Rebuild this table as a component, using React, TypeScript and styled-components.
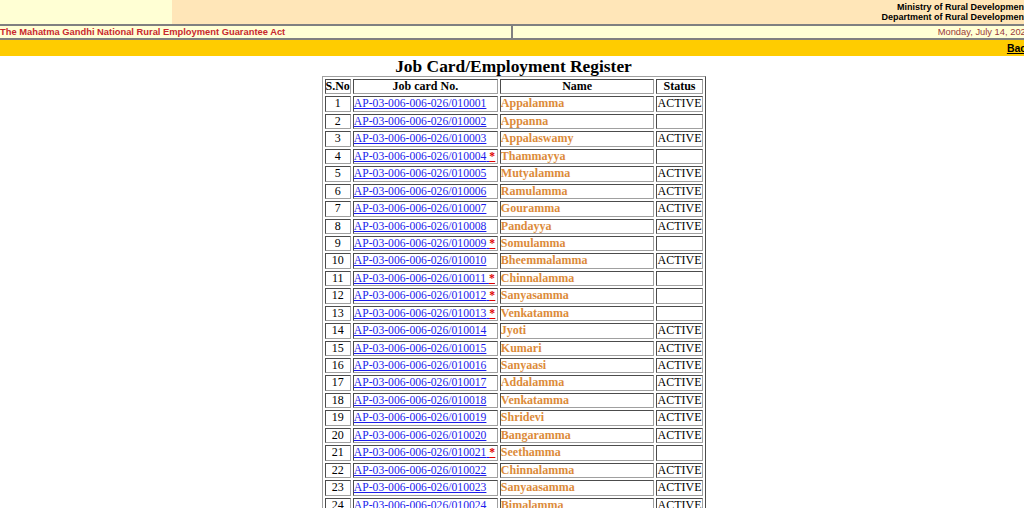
import React from "react";
import styled, { createGlobalStyle } from "styled-components";

const Global = createGlobalStyle`
  html, body { margin: 0; padding: 0; overflow: hidden; background: #ffffff; }
  * { box-sizing: border-box; }
`;

const Page = styled.div`
  width: 1027px;
  font-family: "Liberation Serif", "Times New Roman", serif;
`;

const TopBand = styled.div`
  display: flex;
  height: 24px;
`;

const LogoCell = styled.div`
  width: 172px;
  background: #ffffd4;
`;

const MinistryCell = styled.div`
  flex: 1;
  background: #ffe6b8;
  text-align: right;
  font-family: "Liberation Sans", Arial, sans-serif;
  font-weight: bold;
  font-size: 9px;
  line-height: 10px;
  padding-top: 2px;
  color: #000;
  white-space: nowrap;
`;

const InfoRow = styled.div`
  display: flex;
  height: 16px;
  background: #ffffd4;
  border-top: 2px solid #808080;
  border-bottom: 2px solid #808080;
  font-family: "Liberation Sans", Arial, sans-serif;
  font-size: 9.35px;
  line-height: 12px;
`;

const ActCell = styled.div`
  width: 513px;
  border-right: 2px solid #808080;
  color: #c8282e;
  font-weight: bold;
  white-space: nowrap;
`;

const DateCell = styled.div`
  flex: 1;
  text-align: right;
  color: #9a3b3b;
  white-space: nowrap;
  margin-right: -4px;
`;

const GoldBar = styled.div`
  height: 16px;
  background: #ffcc00;
  text-align: right;
  font-family: "Liberation Sans", Arial, sans-serif;
  font-size: 10.5px;
  font-weight: bold;
  line-height: 16px;
  white-space: nowrap;
`;

const BackLink = styled.a`
  color: #000;
  text-decoration: underline;
  margin-right: -5px;
`;

const Title = styled.h1`
  margin: 0;
  text-align: center;
  font-size: 17.4px;
  line-height: 20px;
  font-weight: bold;
  color: #000;
`;

const Table = styled.table`
  margin: 0 auto;
  width: 384px;
  border: 1px outset #a0a0a0;
  border-collapse: separate;
  border-spacing: 2px;
  font-size: 12px;
  line-height: 13.43px;
`;

const Th = styled.th<{ $w: number }>`
  width: ${(p) => p.$w}px;
  border: 1px inset #a0a0a0;
  padding: 0;
  font-weight: bold;
  text-align: center;
`;

const Td = styled.td<{ $align?: string }>`
  border: 1px inset #a0a0a0;
  padding: 0;
  text-align: ${(p) => p.$align || "left"};
  white-space: nowrap;
`;

const CardLink = styled.a`
  color: #1c1cec;
  text-decoration: underline;
  font-size: 11.65px;
`;

const Star = styled.span`
  color: #e00000;
  font-weight: bold;
  text-decoration: underline;
`;

const Name = styled.span`
  color: #dc8b3a;
  font-weight: bold;
`;

type Row = { name: string; active: boolean; star: boolean };

const rows: Row[] = [
  { name: "Appalamma", active: true, star: false },
  { name: "Appanna", active: false, star: false },
  { name: "Appalaswamy", active: true, star: false },
  { name: "Thammayya", active: false, star: true },
  { name: "Mutyalamma", active: true, star: false },
  { name: "Ramulamma", active: true, star: false },
  { name: "Gouramma", active: true, star: false },
  { name: "Pandayya", active: true, star: false },
  { name: "Somulamma", active: false, star: true },
  { name: "Bheemmalamma", active: true, star: false },
  { name: "Chinnalamma", active: false, star: true },
  { name: "Sanyasamma", active: false, star: true },
  { name: "Venkatamma", active: false, star: true },
  { name: "Jyoti", active: true, star: false },
  { name: "Kumari", active: true, star: false },
  { name: "Sanyaasi", active: true, star: false },
  { name: "Addalamma", active: true, star: false },
  { name: "Venkatamma", active: true, star: false },
  { name: "Shridevi", active: true, star: false },
  { name: "Bangaramma", active: true, star: false },
  { name: "Seethamma", active: false, star: true },
  { name: "Chinnalamma", active: true, star: false },
  { name: "Sanyaasamma", active: true, star: false },
  { name: "Bimalamma", active: true, star: false },
  { name: "Lakshmi", active: true, star: false },
  { name: "Ramana", active: true, star: false },
];

export default function App() {
  return (
    <Page>
      <Global />
      <TopBand>
        <LogoCell />
        <MinistryCell>
          Ministry of Rural Development
          <br />
          Department of Rural Development
        </MinistryCell>
      </TopBand>
      <InfoRow>
        <ActCell>The Mahatma Gandhi National Rural Employment Guarantee Act</ActCell>
        <DateCell>Monday, July 14, 2025</DateCell>
      </InfoRow>
      <GoldBar>
        <BackLink href="#">Back</BackLink>
      </GoldBar>
      <Title>Job Card/Employment Register</Title>
      <Table>
        <thead>
          <tr>
            <Th $w={26}>S.No</Th>
            <Th $w={145}>Job card No.</Th>
            <Th $w={155}>Name</Th>
            <Th $w={46}>Status</Th>
          </tr>
        </thead>
        <tbody>
          {rows.map((r, i) => {
            const n = String(i + 1).padStart(2, "0");
            const id = `AP-03-006-006-026/0100${n}`;
            return (
              <tr key={i}>
                <Td $align="center">{i + 1}</Td>
                <Td>
                  <CardLink href="#">
                    {id}
                    {r.star ? (
                      <>
                        {" "}
                        <Star>*</Star>
                      </>
                    ) : null}
                  </CardLink>
                </Td>
                <Td>
                  <Name>{r.name}</Name>
                </Td>
                <Td>{r.active ? "ACTIVE" : ""}</Td>
              </tr>
            );
          })}
        </tbody>
      </Table>
    </Page>
  );
}
